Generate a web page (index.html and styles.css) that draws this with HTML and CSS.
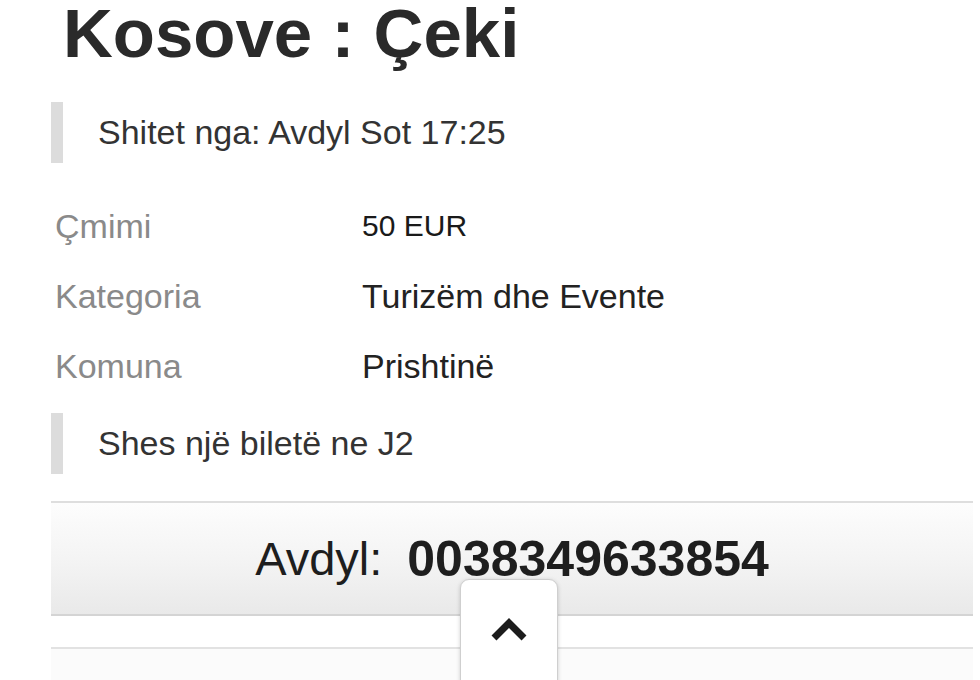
FILE: index.html
```html
<!DOCTYPE html>
<html lang="sq">
<head>
  <meta charset="UTF-8">
  <meta name="viewport" content="width=device-width, initial-scale=1.0">
  <title>Kosove : Çeki</title>
  <link rel="stylesheet" href="styles.css">
</head>
<body>
  <div class="page">
    <h1 class="ad-title">Kosove : Çeki</h1>
    <blockquote class="note">Shitet nga: Avdyl Sot 17:25</blockquote>
    <dl class="details">
      <div class="row">
        <dt>Çmimi</dt>
        <dd class="price">50 EUR</dd>
      </div>
      <div class="row">
        <dt>Kategoria</dt>
        <dd>Turizëm dhe Evente</dd>
      </div>
      <div class="row">
        <dt>Komuna</dt>
        <dd>Prishtinë</dd>
      </div>
    </dl>
    <blockquote class="note note-desc">Shes një biletë ne J2</blockquote>
    <div class="contact">
      <span class="contact-name">Avdyl:</span>
      <span class="contact-phone">0038349633854</span>
    </div>
    <div class="strip"></div>
    <div class="panel"></div>
    <button class="scroll-top" aria-label="Lart">
      <svg width="38" height="23" viewBox="0 0 38 23">
        <polyline points="4,20 19,5 34,20" fill="none" stroke="#1c1c1c" stroke-width="7" stroke-linejoin="miter"/>
      </svg>
    </button>
  </div>
</body>
</html>
```

FILE: styles.css
```css
html, body {
  margin: 0;
  background: #fff;
}
.page {
  position: relative;
  height: 680px;
  overflow: hidden;
  padding: 0 7px 0 51px;
  font-family: "Liberation Sans", Arial, sans-serif;
  color: #222;
}
.ad-title {
  margin: 0;
  padding-left: 12px;
  font-size: 69px;
  line-height: 68px;
  font-weight: bold;
  color: #2a2a2a;
}
.note {
  margin: 34px 0 0 0;
  border-left: 12px solid #dcdcdc;
  padding: 10px 0 10px 35px;
  font-size: 34px;
  line-height: 41px;
  color: #333;
}
.note-desc {
  margin-top: 12px;
}
.details {
  margin: 28px 0 0 0;
}
.row {
  display: flex;
  height: 70px;
  line-height: 70px;
  font-size: 34px;
}
.row dt {
  width: 307px;
  padding-left: 4px;
  color: #8a8a8a;
}
.row dd {
  margin: 0;
  color: #222;
}
.row .price {
  font-size: 30px;
  color: #1a1a1a;
}
.contact {
  margin-top: 27px;
  height: 111px;
  border-top: 2px solid #dedede;
  border-bottom: 2px solid #d4d4d4;
  background: linear-gradient(#fdfdfd, #f3f3f3 55%, #e9e9e9);
  display: flex;
  align-items: center;
  justify-content: center;
  color: #1e1e1e;
}
.contact-name {
  font-size: 47px;
}
.contact-phone {
  margin-left: 25px;
  font-size: 50px;
  font-weight: bold;
}
.strip {
  height: 31px;
  border-bottom: 2px solid #e2e2e2;
  background: #fff;
}
.panel {
  height: 40px;
  background: #fbfbfb;
}
.scroll-top {
  position: absolute;
  left: 460px;
  top: 579px;
  width: 98px;
  height: 110px;
  padding: 38px 0 0 0;
  display: flex;
  justify-content: center;
  align-items: flex-start;
  background: #fff;
  border: 1px solid #cfcfcf;
  border-radius: 9px;
  box-shadow: 0 1px 4px rgba(0, 0, 0, 0.18);
}
```
